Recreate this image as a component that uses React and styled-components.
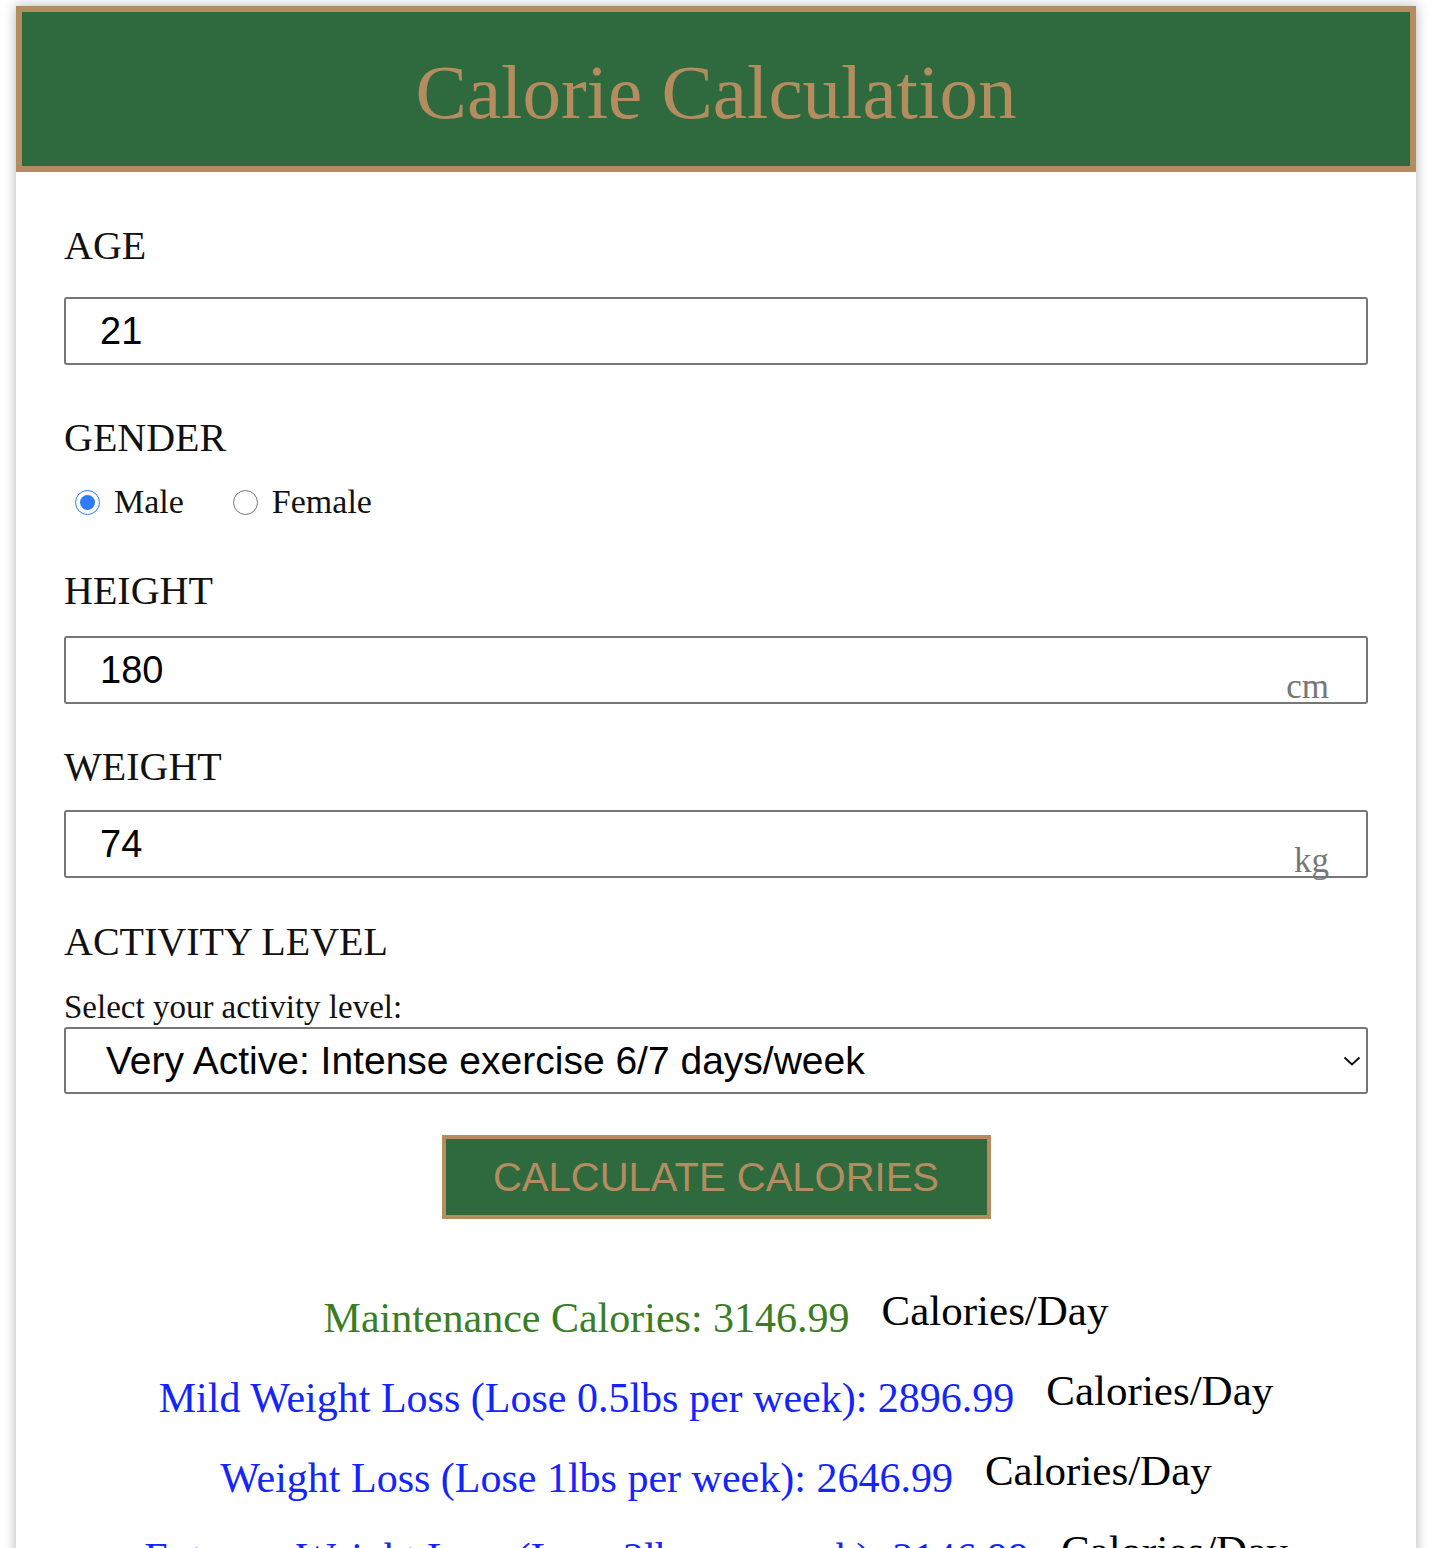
import React, { useState } from 'react';
import styled, { createGlobalStyle } from 'styled-components';

const GlobalStyle = createGlobalStyle`
    body {
        margin: 0;
        background: #ffffff;
        font-family: "Liberation Serif", "Times New Roman", serif;
    }
`

const Card = styled.div`
    margin: 6px 14px 0 16px;
    background: #ffffff;
    box-shadow: 0 0 12px rgba(0, 0, 0, 0.3);
    padding-bottom: 40px;
`

const Header = styled.header`
    background: #2e6a3e;
    border: 6px solid #b38d60;
    padding: 42px 0 35px;
    text-align: center;
`

const Title = styled.h1`
    margin: 0;
    font-family: "Liberation Serif", "Times New Roman", serif;
    font-weight: 400;
    font-size: 77px;
    line-height: 77px;
    color: #b38d60;
`

const Form = styled.form`
    padding: 0 48px;
    display: flex;
    flex-direction: column;
`

const Label = styled.div`
    margin-top: ${(props) => props.$top};
    font-size: 40px;
    line-height: 48px;
    color: #111;
`

const InputWrap = styled.div`
    position: relative;
    margin-top: ${(props) => props.$top};
`

const TextInput = styled.input`
    box-sizing: border-box;
    width: 100%;
    height: 68px;
    border: 2px solid #767676;
    border-radius: 3px;
    padding: 0 0 0 34px;
    font-family: "Liberation Sans", Arial, sans-serif;
    font-size: 38px;
    color: #000;
    background: #fff;
    outline: none;
`

const Unit = styled.span`
    position: absolute;
    right: 39px;
    bottom: 0;
    font-size: 35px;
    line-height: 35px;
    color: #777;
`

const RadioRow = styled.div`
    display: flex;
    align-items: center;
    height: 40px;
    margin-top: 20px;
    padding-left: 11px;
`

const RadioLabel = styled.label`
    display: inline-flex;
    align-items: center;
    gap: 14px;
    margin-right: 49px;
    font-size: 34px;
    color: #111;
`

const Radio = styled.input`
    width: 25px;
    height: 25px;
    margin: 0;
    accent-color: #2f7cf6;
`

const SelectCaption = styled.div`
    margin-top: 22px;
    font-size: 33px;
    line-height: 38px;
    color: #111;
`

const SelectWrap = styled.div`
    position: relative;
    margin-top: 1px;
`

const Select = styled.select`
    appearance: none;
    box-sizing: border-box;
    width: 100%;
    height: 67px;
    border: 2px solid #767676;
    border-radius: 3px;
    padding: 0 0 0 40px;
    font-family: "Liberation Sans", Arial, sans-serif;
    font-size: 39px;
    color: #000;
    background: #fff;
    outline: none;
`

const Chevron = styled.svg`
    position: absolute;
    right: 7px;
    top: 29px;
    pointer-events: none;
`

const CalcButton = styled.button`
    align-self: center;
    box-sizing: border-box;
    width: 549px;
    height: 84px;
    margin-top: 41px;
    background: #2e6a3e;
    border: 4px solid #b38d60;
    color: #b38d60;
    font-family: "Liberation Sans", Arial, sans-serif;
    font-size: 40px;
    cursor: pointer;
`

const Results = styled.div`
    display: flex;
    flex-direction: column;
    gap: 23px;
    margin-top: 67px;
`

const ResultRow = styled.div`
    display: flex;
    justify-content: center;
    align-items: flex-start;
    gap: 32px;
    font-size: 42px;
    line-height: 50px;
    white-space: nowrap;
`

const ResultValue = styled.span`
    margin-top: 7px;
    color: ${(props) => props.$color};
`

const PerDay = styled.span`
    color: #000;
    font-size: 43px;
`

const results = [
    { text: 'Maintenance Calories', offset: 0, color: '#3a7d22' },
    { text: 'Mild Weight Loss (Lose 0.5lbs per week)', offset: 250, color: '#1325ff' },
    { text: 'Weight Loss (Lose 1lbs per week)', offset: 500, color: '#1325ff' },
    { text: 'Extreme Weight Loss (Lose 2lbs per week)', offset: 1000, color: '#1325ff' },
]

export default function App() {
    const [age, setAge] = useState('21');
    const [gender, setGender] = useState('male');
    const [height, setHeight] = useState('180');
    const [weight, setWeight] = useState('74');
    const [activity, setActivity] = useState('very');
    const maintenance = 3146.99;

    return (
        <>
            <GlobalStyle />
            <Card>
                <Header>
                    <Title>Calorie Calculation</Title>
                </Header>
                <Form onSubmit={(e) => e.preventDefault()}>
                    <Label $top='50px'>AGE</Label>
                    <InputWrap $top='27px'>
                        <TextInput value={age} onChange={(e) => setAge(e.target.value)} />
                    </InputWrap>

                    <Label $top='49px'>GENDER</Label>
                    <RadioRow>
                        <RadioLabel>
                            <Radio type='radio' name='gender' checked={gender === 'male'}
                                   onChange={() => setGender('male')} />
                            Male
                        </RadioLabel>
                        <RadioLabel>
                            <Radio type='radio' name='gender' checked={gender === 'female'}
                                   onChange={() => setGender('female')} />
                            Female
                        </RadioLabel>
                    </RadioRow>

                    <Label $top='45px'>HEIGHT</Label>
                    <InputWrap $top='21px'>
                        <TextInput value={height} onChange={(e) => setHeight(e.target.value)} />
                        <Unit>cm</Unit>
                    </InputWrap>

                    <Label $top='39px'>WEIGHT</Label>
                    <InputWrap $top='19px'>
                        <TextInput value={weight} onChange={(e) => setWeight(e.target.value)} />
                        <Unit>kg</Unit>
                    </InputWrap>

                    <Label $top='40px'>ACTIVITY LEVEL</Label>
                    <SelectCaption>Select your activity level:</SelectCaption>
                    <SelectWrap>
                        <Select value={activity} onChange={(e) => setActivity(e.target.value)}>
                            <option value='sedentary'>Sedentary: Little or no exercise</option>
                            <option value='light'>Lightly Active: Exercise 1/3 days/week</option>
                            <option value='moderate'>Moderately Active: Exercise 3/5 days/week</option>
                            <option value='very'>Very Active: Intense exercise 6/7 days/week</option>
                        </Select>
                        <Chevron width='18' height='10' viewBox='0 0 18 10'>
                            <polyline points='1.5,1.5 9,8.5 16.5,1.5' fill='none' stroke='#111' strokeWidth='2' />
                        </Chevron>
                    </SelectWrap>

                    <CalcButton type='submit'>CALCULATE CALORIES</CalcButton>

                    <Results>
                        { results.map((r) => (
                            <ResultRow key={r.text}>
                                <ResultValue $color={r.color}>
                                    {r.text}: {(maintenance - r.offset).toFixed(2)}
                                </ResultValue>
                                <PerDay>Calories/Day</PerDay>
                            </ResultRow>
                        )) }
                    </Results>
                </Form>
            </Card>
        </>
    );
}
